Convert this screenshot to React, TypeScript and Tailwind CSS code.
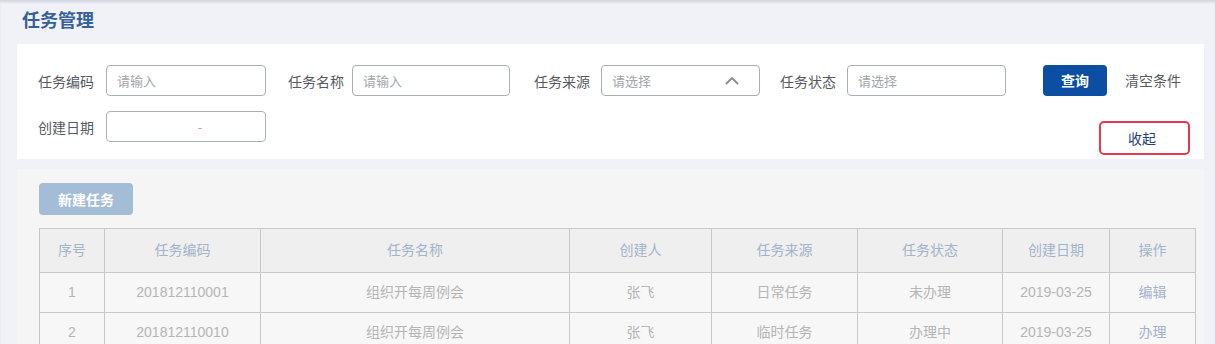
import React from "react";

const font = { fontFamily: '"Noto Sans CJK SC", "Noto Sans", sans-serif' };
const tableFont = { fontFamily: '"Liberation Sans", "Noto Sans CJK SC", sans-serif' };

function Label({ text, className = "" }: { text: string; className?: string }) {
  return (
    <span className={`w-[57px] shrink-0 whitespace-nowrap text-[14px] leading-[20px] text-[#555a62] ${className}`}>
      {text}
    </span>
  );
}

function Input({ placeholder, className = "" }: { placeholder: string; className?: string }) {
  return (
    <div
      className={`h-[31px] shrink-0 rounded-[4px] border border-[#a9aeb6] bg-white flex items-center pl-[10px] text-[13px] text-[#a3a6ab] ${className}`}
    >
      {placeholder}
    </div>
  );
}

const cols = [65, 156, 309, 142, 146, 145, 107, 86];
const headers = ["序号", "任务编码", "任务名称", "创建人", "任务来源", "任务状态", "创建日期", "操作"];
const rows = [
  ["1", "201812110001", "组织开每周例会", "张飞", "日常任务", "未办理", "2019-03-25", "编辑"],
  ["2", "201812110010", "组织开每周例会", "张飞", "临时任务", "办理中", "2019-03-25", "办理"],
];

export default function App() {
  return (
    <div
      className="w-[1215px] h-[344px] overflow-hidden bg-[#f0f2f7] shadow-[inset_0_3px_3px_-1px_rgba(60,70,100,0.18)]"
      style={font}
    >
      <div className="h-[44px] pl-[22px] pt-[7px]">
        <h1 className="text-[18px] leading-[24px] font-bold text-[#35609b]">任务管理</h1>
      </div>

      <div className="ml-[17px] mr-[11px] h-[115px] bg-white pt-[21px] pl-[21px]">
        <div className="flex items-center h-[31px]">
          <Label text="任务编码" />
          <Input placeholder="请输入" className="ml-[11px] w-[160px]" />
          <Label text="任务名称" className="ml-[22px]" />
          <Input placeholder="请输入" className="ml-[7px] w-[158px]" />
          <Label text="任务来源" className="ml-[24px]" />
          <div className="ml-[10px] w-[159px] h-[31px] shrink-0 rounded-[4px] border border-[#a9aeb6] bg-white flex items-center justify-between pl-[10px] pr-[20px] text-[13px] text-[#a3a6ab]">
            <span>请选择</span>
            <svg width="14" height="9" viewBox="0 0 14 9" fill="none">
              <path d="M1.5 7.5 L7 2 L12.5 7.5" stroke="#8c8f94" strokeWidth="2" strokeLinecap="round" strokeLinejoin="round" />
            </svg>
          </div>
          <Label text="任务状态" className="ml-[20px]" />
          <Input placeholder="请选择" className="ml-[10px] w-[159px]" />
          <button className="ml-[37px] w-[64px] h-[31px] rounded-[4px] bg-[#0b4ea2] text-white text-[14px] font-bold">
            查询
          </button>
          <span className="ml-[18px] text-[14px] text-[#555a62] whitespace-nowrap">清空条件</span>
        </div>
        <div className="flex items-start mt-[15px]">
          <div className="flex items-center h-[31px]">
            <Label text="创建日期" />
            <div className="ml-[11px] w-[160px] h-[31px] rounded-[4px] border border-[#a9aeb6] bg-white flex items-center justify-center pl-[28px] text-[13px] text-[#d99a82]">
              -
            </div>
          </div>
          <button className="ml-auto mr-[14px] mt-[10px] w-[91px] h-[34px] rounded-[5px] border-2 border-[#e3384e] bg-white text-[14px] text-[#1f3f78] pr-[5px]">
            收起
          </button>
        </div>
      </div>

      <div className="ml-[17px] mr-[11px] mt-[10px] h-[200px] bg-[#f5f5f5] pt-[14px] pl-[22px]">
        <button className="w-[94px] h-[32px] rounded-[4px] bg-[#a3bdd7] text-white text-[14px] font-bold">
          新建任务
        </button>
        <table className="mt-[13px] border-collapse text-[14px]" style={tableFont}>
          <thead>
            <tr className="h-[44px] bg-[#efefef]">
              {headers.map((h, i) => (
                <th
                  key={h}
                  style={{ width: cols[i] }}
                  className="border border-[#c8c8c8] font-normal text-[#a4b3ca] p-0"
                >
                  {h}
                </th>
              ))}
            </tr>
          </thead>
          <tbody>
            {rows.map((r) => (
              <tr key={r[0]} className="h-[40px] bg-[#f7f7f7]">
                {r.map((c, i) => (
                  <td
                    key={i}
                    className={`border border-[#c8c8c8] text-center p-0 ${i === 7 ? "text-[#a4b3ca]" : "text-[#b5b5b5]"}`}
                  >
                    {c}
                  </td>
                ))}
              </tr>
            ))}
          </tbody>
        </table>
      </div>
    </div>
  );
}
